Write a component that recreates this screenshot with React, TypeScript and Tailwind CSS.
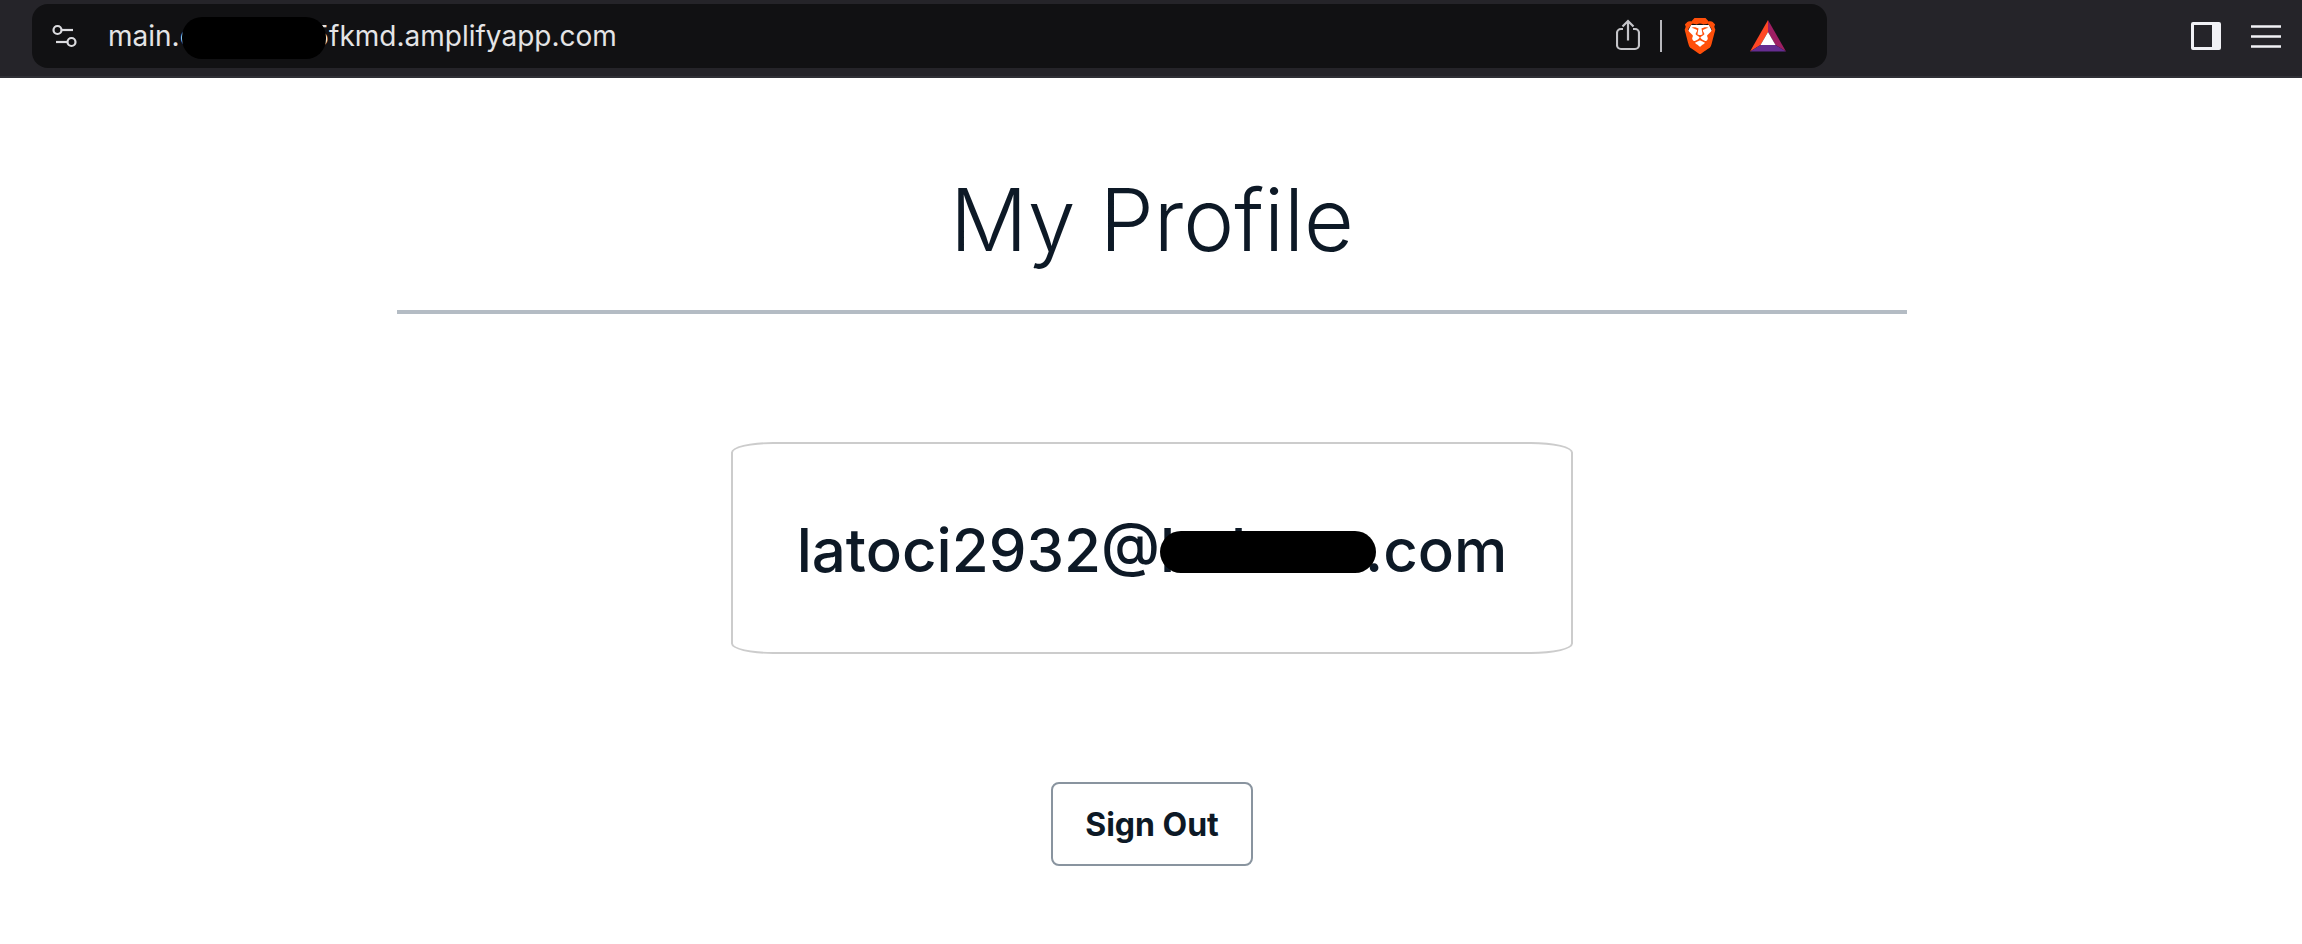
import { SiBrave } from "react-icons/si";

function TuneIcon() {
  return (
    <svg width="26" height="24" viewBox="0 0 26 24" fill="none" stroke="#dcdce0" strokeWidth="2.2" aria-hidden="true">
      <circle cx="5.5" cy="6" r="4" />
      <path d="M10 6h11" />
      <circle cx="19.5" cy="18" r="4" />
      <path d="M15 18H4" />
    </svg>
  );
}

function ShareIcon() {
  return (
    <svg width="24" height="34" viewBox="0 0 24 34" fill="none" stroke="#c4c4c8" strokeWidth="2.2" aria-hidden="true">
      <path d="M7 10H5a4 4 0 0 0-4 4v12a4 4 0 0 0 4 4h14a4 4 0 0 0 4-4V14a4 4 0 0 0-4-4h-2" />
      <path d="M12 21.500V2M6.500 7.500L12 2l5.500 5.500" />
    </svg>
  );
}

function ShieldIcon() {
  return (
    <span className="relative block size-9">
      <svg className="absolute inset-0" width="36" height="36" viewBox="0 0 36 36" aria-hidden="true">
        <path d="M9 7h18l3 6-4 14-8 5-8-5-4-14z" fill="#fff" />
      </svg>
      <SiBrave className="absolute inset-0 text-[#ff4f0a]" size={36} />
    </span>
  );
}

function RewardsIcon() {
  return (
    <svg width="36" height="32" viewBox="0 0 36 32" aria-hidden="true">
      <path d="M18 0L0 31.500L10.500 25L18 12z" fill="#ff4724" />
      <path d="M18 0v12l7.500 13L36 31.500z" fill="#9e1f63" />
      <path d="M0 31.500h36L25.500 25h-15z" fill="#662d91" />
      <path d="M18 12l7.500 13h-15z" fill="#fff" />
    </svg>
  );
}

function SidebarIcon() {
  return (
    <svg width="30" height="28" viewBox="0 0 30 28" aria-hidden="true">
      <path fillRule="evenodd" d="M2 0h26a2 2 0 0 1 2 2v24a2 2 0 0 1-2 2H2a2 2 0 0 1-2-2V2a2 2 0 0 1 2-2zM3 3v22h18V3z" fill="#f1f1f5" />
    </svg>
  );
}

function MenuIcon() {
  return (
    <svg width="30" height="24" viewBox="0 0 30 24" aria-hidden="true">
      <path d="M0 2.500h30M0 12.500h30M0 22.500h30" stroke="#f1f1f5" strokeWidth="2.500" />
    </svg>
  );
}

function BrowserBar() {
  return (
    <header className="flex h-[78px] items-start justify-between border-b-2 border-[#303036] bg-[#252429] pt-1 pr-[21px] pl-8">
      <div className="relative flex h-16 w-[calc(80%-4px)] items-center rounded-2xl bg-[#111113] pr-[41px] pl-5">
        <button type="button" aria-label="Site settings" className="shrink-0">
          <TuneIcon />
        </button>
        <input
          type="text"
          aria-label="Address"
          defaultValue={"main.d" + "\u00a0".repeat(6) + "-" + "\u00a0".repeat(7) + "5fkmd.amplifyapp.com"}
          className="ml-[30px] h-10 min-w-0 flex-1 bg-transparent text-[28px] text-[#e4e4e6] outline-none"
        />
        <span className="absolute top-[13px] left-[150px] h-[42px] w-[144px] rounded-[20px] bg-black" />
        <div className="flex items-center">
          <button type="button" aria-label="Share"><ShareIcon /></button>
          <span className="ml-5 h-8 w-0.5 bg-[#b9b9bd]" />
          <button type="button" aria-label="Shields" className="ml-5"><ShieldIcon /></button>
          <button type="button" aria-label="Rewards" className="ml-8"><RewardsIcon /></button>
        </div>
      </div>
      <div className="flex h-16 items-center gap-[30px]">
        <button type="button" aria-label="Sidebar"><SidebarIcon /></button>
        <button type="button" aria-label="Menu"><MenuIcon /></button>
      </div>
    </header>
  );
}

export default function App() {
  return (
    <div className="min-h-screen bg-white font-['Inter',sans-serif] text-[#0d1926]">
      <BrowserBar />
      <div className="pl-0.5">
        <main className="mx-auto flex w-full max-w-[1510px] flex-col items-center pt-[82px]">
          <h1 className="text-[86px] leading-[120px] font-[350]">My Profile</h1>
          <hr className="mt-[30px] w-full border-0 border-t-4 border-[#b4bcc4]" />
          <section className="mt-32 flex items-center rounded-[5%] border-2 border-[#cccccc] px-16 pt-[66px] pb-[62px]">
            <h2 className="flex text-[60px] leading-[80px] font-medium">
              <span>latoci2932@</span>
              <span className="relative flex w-[205px]">
                <span>l</span>
                <span className="ml-14">l</span>
                <span className="ml-8">t</span>
                <span className="absolute top-[21px] left-0 h-[42px] w-[216px] rounded-full bg-black" />
              </span>
              <span>.com</span>
            </h2>
          </section>
          <button type="button" className="mt-32 rounded-lg border-2 border-[#89949f] px-8 pt-[21px] pb-[19px] text-[32px] leading-10 font-bold">
            Sign Out
          </button>
        </main>
      </div>
    </div>
  );
}
